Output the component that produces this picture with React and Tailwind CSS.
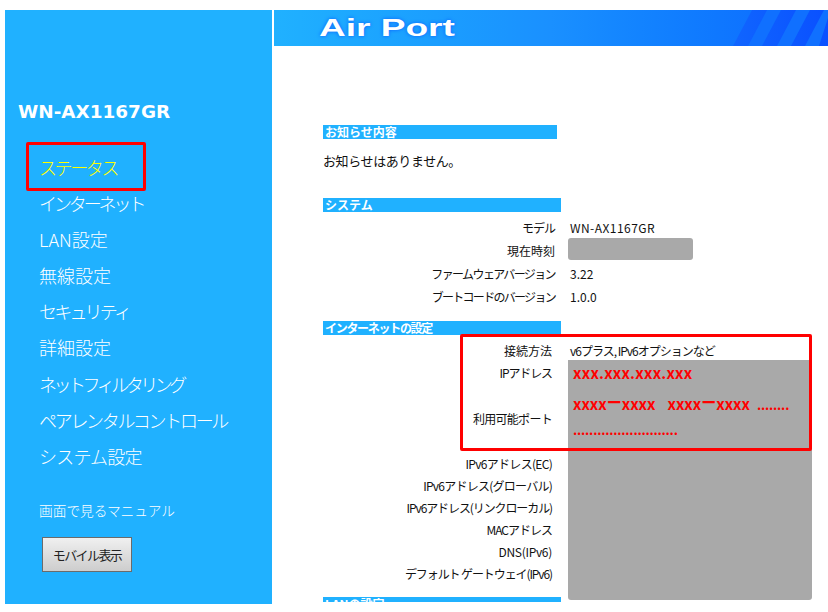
const font = { fontFamily: '"Noto Sans CJK JP", sans-serif' };

const menu = [
  ["ステータス", "tracking-[-2.4px] text-[#ffff00]"],
  ["インターネット", "tracking-[-3.1px] text-white"],
  ["LAN設定", "text-white"],
  ["無線設定", "text-white"],
  ["セキュリティ", "tracking-[-2.8px] text-white"],
  ["詳細設定", "text-white"],
  ["ネットフィルタリング", "tracking-[-3.5px] text-white"],
  ["ペアレンタルコントロール", "tracking-[-2.3px] text-white"],
  ["システム設定", "tracking-[-0.8px] text-white"],
];

function Bar({ children, w, t = "" }) {
  return <div className={`${w} ${t} h-[14px] bg-[#20b1ff] text-white text-[12px] font-bold leading-[14px] pl-[2px] whitespace-nowrap`}>{children}</div>;
}

function Row({ label, value, h = "h-[22px]", lt = "", vt = "", lw = "w-[229px] mr-[18px]" }) {
  return (
    <div className={`flex items-center ${h} text-[12px] text-[#111]`}>
      <div className={`${lw} ${lt} text-right whitespace-nowrap`}>{label}</div>
      <div className={`${vt} whitespace-nowrap`}>{value}</div>
    </div>
  );
}

const upper = "w-[232px] mr-[15px]";

export default function App() {
  return (
    <div className="relative w-[828px] h-[612px] bg-white overflow-hidden" style={font}>
      <div className="flex pl-[5px] pt-[10px] gap-[2px] items-start">
        <aside className="relative w-[267px] h-[594px] bg-[#20b1ff] shrink-0">
          <h1 className="pt-[90px] pl-[13px] text-[18.4px] leading-[24px] font-bold text-white" style={{ fontFamily: '"DejaVu Sans", sans-serif' }}>WN-AX1167GR</h1>
          <ul className="mt-[25px] pl-[34px]">
            {menu.map(([m, c]) => (
              <li key={m} className={`h-[36.1px] leading-[36px] text-[18px] font-light whitespace-nowrap ${c}`}>{m}</li>
            ))}
          </ul>
          <p className="mt-[26px] pl-[34px] text-[13.7px] leading-[20px] font-light text-white">画面で見るマニュアル</p>
          <button className="ml-[37px] mt-[17px] w-[90px] h-[35px] border border-[#6b6b6b] bg-gradient-to-b from-[#f0f0f0] to-[#cdcdcd] text-[13px] tracking-[-1.6px] text-[#222]">モバイル表示</button>
          <div className="absolute left-[21px] top-[132px] w-[120px] h-[49px] border-[3px] border-[#ff0000] rounded-[2px]"></div>
        </aside>
        <div className="flex-1 h-[592px] overflow-hidden">
          <header className="relative h-[36px] bg-gradient-to-r from-[#20b1ff] via-[#1a90ff] to-[#0f66ff] pl-[45px] overflow-hidden">
            <span className="block origin-left scale-x-[1.61] text-white text-[23px] font-bold leading-[36px] [text-shadow:0_0_3px_#0a5cff]" style={{ fontFamily: '"Liberation Sans", sans-serif' }}>Air Port</span>
            <svg className="absolute right-0 top-0" width="96" height="36" viewBox="0 0 96 36">
              <defs>
                <linearGradient id="d" x1="0" x2="1" y1="0" y2="0">
                  <stop offset="0" stopColor="#1065ff" />
                  <stop offset="1" stopColor="#0a50ff" />
                </linearGradient>
              </defs>
              <path d="M1 36 L20 0 H96 V36Z" fill="url(#d)" />
              <path d="M16 36 L35 0 H49 L30 36Z M45 36 L64 0 H78 L59 36Z M73 36 L92 0 H96 V8 L87 36Z" fill="#1070ff" />
            </svg>
          </header>
          <main className="pl-[49px] pt-[79px]">
            <Bar w="w-[234px]">お知らせ内容</Bar>
            <p className="mt-[12px] h-[20px] text-[13px] leading-[20px] tracking-[-0.4px] text-[#111]">お知らせはありません。</p>
            <div className="mt-[27px]"><Bar w="w-[238px]">システム</Bar></div>
            <div className="mt-[4px]">
              <Row h="h-[23px]" lw={upper} lt="tracking-[-1px]" vt="tracking-[0.45px]" label="モデル" value="WN-AX1167GR" />
              <Row h="h-[23px]" lw={upper} label="現在時刻" value="" />
              <Row h="h-[23px]" lw={upper} lt="tracking-[-1.6px]" label="ファームウェアバージョン" value="3.22" />
              <Row h="h-[24px]" lw={upper} lt="tracking-[-1.7px]" label="ブートコードのバージョン" value="1.0.0" />
            </div>
            <div className="mt-[12px]"><Bar w="w-[238px]" t="tracking-[-1.3px]">インターネットの設定</Bar></div>
            <div className="mt-[4px]">
              <Row h="h-[23px]" vt="tracking-[-1px]" label="接続方法" value="v6プラス, IPv6オプションなど" />
              <Row lt="tracking-[-1.1px]" label="IPアドレス" value="" />
              <div className="h-[24px]"></div>
              <Row lt="tracking-[-0.7px]" label="利用可能ポート" value="" />
              <div className="h-[23px]"></div>
              <Row lt="tracking-[-0.7px]" label="IPv6アドレス(EC)" value="" />
              <Row lt="tracking-[-0.75px]" label="IPv6アドレス(グローバル)" value="" />
              <Row lt="tracking-[-1.1px]" label="IPv6アドレス(リンクローカル)" value="" />
              <Row lt="tracking-[-1px]" label="MACアドレス" value="" />
              <Row lt="tracking-[-0.3px]" label="DNS(IPv6)" value="" />
              <Row lt="tracking-[-1.1px]" label="デフォルト ゲートウェイ(IPv6)" value="" />
            </div>
            <div className="mt-[12px]"><Bar w="w-[238px]">LANの設定</Bar></div>
          </main>
        </div>
      </div>
      <div className="absolute left-[568px] top-[238px] w-[125px] h-[22px] bg-[#a9a9a9] rounded-[3px]"></div>
      <div className="absolute left-[568px] top-[360px] w-[244px] h-[240px] bg-[#a9a9a9] rounded-b-[3px] pl-[5px] pt-[3px] text-[#ff0000] text-[15px] font-semibold leading-[20px] whitespace-nowrap">
        <div className="tracking-[0.3px]">xxx.xxx.xxx.xxx</div>
        <div className="mt-[11px]">xxxx<span className="inline-block -translate-y-[2px]">ー</span>xxxx<span className="ml-[12px]">xxxx<span className="inline-block -translate-y-[2px]">ー</span>xxxx</span><span className="ml-[7px] text-[13px] font-bold tracking-[-0.2px]">........</span></div>
        <div className="mt-[5px] text-[13px] font-bold tracking-[-0.2px]">..........................</div>
      </div>
      <div className="absolute left-[460px] top-[334px] w-[352px] h-[117px] border-[3px] border-[#ff0000] rounded-[2px]"></div>
    </div>
  );
}
